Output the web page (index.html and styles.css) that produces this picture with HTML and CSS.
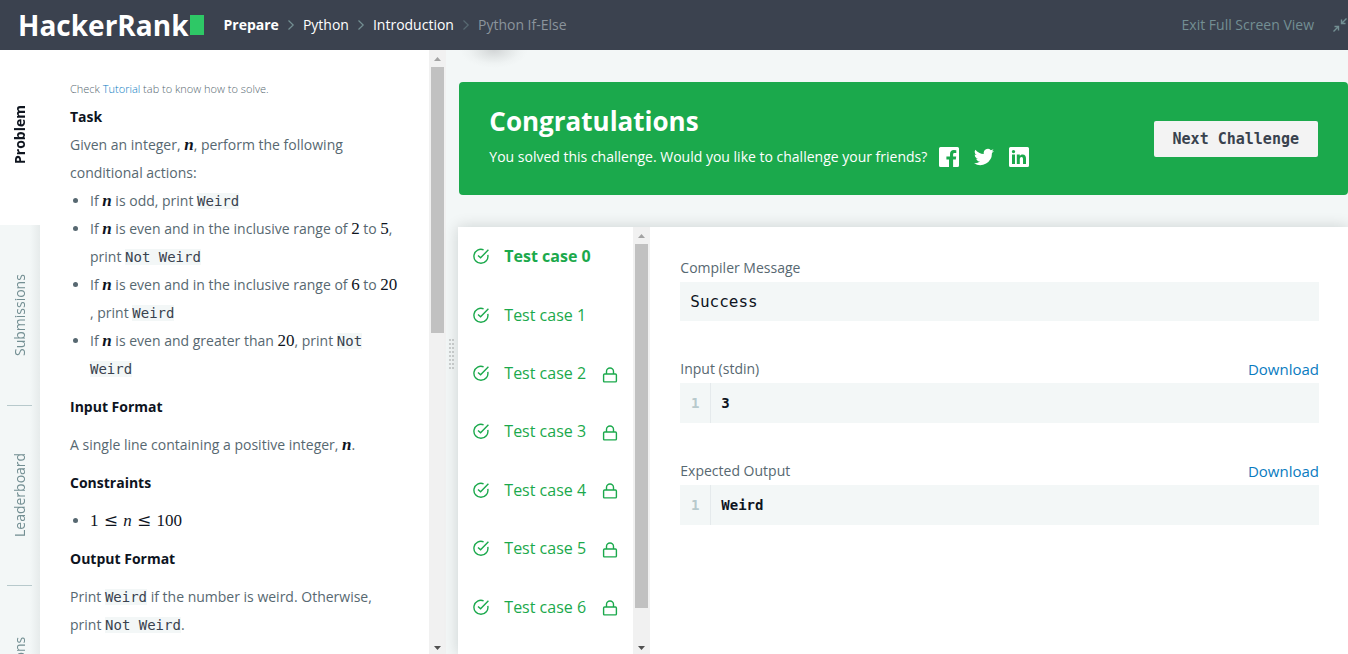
FILE: index.html
```html
<!DOCTYPE html>
<html lang="en">
<head>
<meta charset="utf-8">
<title>Python If-Else | HackerRank</title>
<link rel="stylesheet" href="styles.css">
</head>
<body>
<svg width="0" height="0" class="defs" aria-hidden="true">
  <symbol id="check" viewBox="0 0 16 16"><path d="M14.8 6.9A7 7 0 1 1 10.6 1.8M5 7.4l2.6 2.4L15.4 1.8" fill="none" stroke="currentColor" stroke-width="1.4"/></symbol>
  <symbol id="lock" viewBox="0 0 16 16"><path d="M2.6 7h10.8q1 0 1 1v5.900q0 1-1 1H2.600q-1 0-1-1V8q0-1 1-1zM4.500 7V4.500a3.500 3.500 0 0 1 7 0V7" fill="none" stroke="currentColor" stroke-width="1.400"/></symbol>
  <symbol id="chevron" viewBox="0 0 8 12"><path d="M1.500 1.500 6.200 6 1.500 10.500" fill="none" stroke="currentColor" stroke-width="1.200"/></symbol>
  <symbol id="up" viewBox="0 0 7 4"><path d="M0 4 3.500 0 7 4z" fill="currentColor"/></symbol>
  <symbol id="down" viewBox="0 0 7 4"><path d="M0 0 3.500 4 7 0z" fill="currentColor"/></symbol>
</svg>
<header class="topbar">
  <a class="logo" href="#">HackerRank<span class="logo-block"></span></a>
  <nav class="crumbs" aria-label="Breadcrumb">
    <a class="crumb crumb-strong" href="#">Prepare</a>
    <svg class="chevron"><use href="#chevron"/></svg>
    <a class="crumb" href="#">Python</a>
    <svg class="chevron"><use href="#chevron"/></svg>
    <a class="crumb" href="#">Introduction</a>
    <svg class="chevron chevron-dim"><use href="#chevron"/></svg>
    <span class="crumb crumb-current">Python If-Else</span>
  </nav>
  <button class="exit" type="button">Exit Full Screen View
    <svg class="exit-icon" viewBox="0 0 14 14"><path d="M0.500 13.500 5.500 8.500M1.500 8.500h4v4M13.500 .5l-5 5M8.500 1.500v4h4" fill="none" stroke="currentColor" stroke-width="1.400"/></svg>
  </button>
</header>
<main class="workspace">
  <section class="left">
    <nav class="tabs" aria-label="Challenge sections">
      <a class="tab tab-active" href="#">Problem</a>
      <a class="tab" href="#">Submissions</a>
      <a class="tab" href="#">Leaderboard</a>
      <a class="tab" href="#">Discussions</a>
    </nav>
    <article class="problem">
      <p class="hint">Check <a href="#">Tutorial</a> tab to know how to solve.</p>
      <h2>Task</h2>
      <p class="first">Given an integer, <i class="math bold">n</i>, perform the following conditional actions:</p>
      <ul class="first">
        <li>If <i class="math bold">n</i> is odd, print <code>Weird</code></li>
        <li>If <i class="math bold">n</i> is even and in the inclusive range of <span class="math">2</span> to <span class="math">5</span>, print <code>Not Weird</code></li>
        <li>If <i class="math bold">n</i> is even and in the inclusive range of <span class="math">6</span> to <span class="math">20</span><wbr>, print <code>Weird</code></li>
        <li>If <i class="math bold">n</i> is even and greater than <span class="math">20</span>, print <code>Not Weird</code></li>
      </ul>
      <h2>Input Format</h2>
      <p>A single line containing a positive integer, <i class="math bold">n</i>.</p>
      <h2>Constraints</h2>
      <ul><li><span class="math">1 <span class="rel">≤</span> <i>n</i> <span class="rel">≤</span> 100</span></li></ul>
      <h2>Output Format</h2>
      <p>Print <code>Weird</code> if the number is weird. Otherwise, print <code>Not Weird</code>.</p>
    </article>
    <div class="scroll" aria-hidden="true">
      <svg class="arrow"><use href="#up"/></svg>
      <div class="track"><div class="thumb thumb-problem"></div></div>
      <svg class="arrow arrow-dark"><use href="#down"/></svg>
    </div>
    <div class="splitter"><span class="grip"></span></div>
  </section>
  <section class="right">
    <div class="orb-shadow"></div>
    <div class="banner">
      <div class="banner-text">
        <h1>Congratulations</h1>
        <div class="share">
          <span class="share-text">You solved this challenge. Would you like to challenge your friends?</span>
          <a href="#" aria-label="Facebook"><svg viewBox="0 0 20 20"><path d="M1.500 0h17Q20 0 20 1.500v17q0 1.500-1.500 1.500h-4.400v-7.600h2.700l.4-3h-3.100V7.500c0-.9.3-1.500 1.500-1.500h1.700V3.200l-2.400-.1c-2.400 0-3.900 1.400-3.900 4v2.300H7.400v3H10V20H1.500Q0 20 0 18.500v-17Q0 0 1.500 0z"/></svg></a>
          <a href="#" aria-label="Twitter"><svg viewBox="0 0 24 24"><path d="M23.950 4.600a10 10 0 0 1-2.800.8 5 5 0 0 0 2.150-2.700 10 10 0 0 1-3.100 1.200 4.900 4.900 0 0 0-8.400 4.500A14 14 0 0 1 1.650 3.200a4.900 4.900 0 0 0 1.500 6.500 4.900 4.900 0 0 1-2.200-.6 4.900 4.900 0 0 0 3.900 4.900 5 5 0 0 1-2.200.1 4.900 4.900 0 0 0 4.600 3.400A9.900 9.900 0 0 1 0 19.500a14 14 0 0 0 21.500-12.400A10 10 0 0 0 23.950 4.600z"/></svg></a>
          <a href="#" aria-label="LinkedIn"><svg viewBox="0 0 20 20"><path fill-rule="evenodd" d="M1.500 0h17Q20 0 20 1.500v17q0 1.500-1.500 1.500h-17Q0 20 0 18.500v-17Q0 0 1.500 0zM3 7.600V17h3V7.600zM4.500 2.900a1.700 1.700 0 1 0 0 3.400 1.700 1.700 0 0 0 0-3.400zM7.800 7.600V17h3v-4.700c0-1.300.4-2.300 1.700-2.300s1.500 1.100 1.500 2.400V17h3v-5.300c0-2.500-.8-4.300-3.400-4.300-1.400 0-2.400.7-2.800 1.500V7.600z"/></svg></a>
        </div>
      </div>
      <button class="next" type="button">Next Challenge</button>
    </div>
    <div class="results">
      <ul class="cases">
        <li><button class="case case-active" type="button"><svg class="check"><use href="#check"/></svg>Test case 0</button></li>
        <li><button class="case" type="button"><svg class="check"><use href="#check"/></svg>Test case 1</button></li>
        <li><button class="case" type="button"><svg class="check"><use href="#check"/></svg>Test case 2<svg class="lock"><use href="#lock"/></svg></button></li>
        <li><button class="case" type="button"><svg class="check"><use href="#check"/></svg>Test case 3<svg class="lock"><use href="#lock"/></svg></button></li>
        <li><button class="case" type="button"><svg class="check"><use href="#check"/></svg>Test case 4<svg class="lock"><use href="#lock"/></svg></button></li>
        <li><button class="case" type="button"><svg class="check"><use href="#check"/></svg>Test case 5<svg class="lock"><use href="#lock"/></svg></button></li>
        <li><button class="case" type="button"><svg class="check"><use href="#check"/></svg>Test case 6<svg class="lock"><use href="#lock"/></svg></button></li>
      </ul>
      <div class="scroll" aria-hidden="true">
        <svg class="arrow"><use href="#up"/></svg>
        <div class="track"><div class="thumb thumb-cases"></div></div>
        <svg class="arrow arrow-dark"><use href="#down"/></svg>
      </div>
      <div class="detail">
        <section class="block">
          <div class="block-head"><h3>Compiler Message</h3></div>
          <div class="message">Success</div>
        </section>
        <section class="block">
          <div class="block-head"><h3>Input (stdin)</h3><a href="#">Download</a></div>
          <div class="code"><span class="line-no">1</span><span class="line">3</span></div>
        </section>
        <section class="block">
          <div class="block-head"><h3>Expected Output</h3><a href="#">Download</a></div>
          <div class="code"><span class="line-no">1</span><span class="line">Weird</span></div>
        </section>
      </div>
    </div>
  </section>
</main>
</body>
</html>
```
FILE: styles.css
```css
* { box-sizing: border-box; }
body {
  margin: 0;
  height: 100vh;
  display: flex;
  flex-direction: column;
  overflow: hidden;
  font: 14px/20px "Open Sans", sans-serif;
  color: #576871;
  background: #f3f7f7;
}
h1, h2, h3, p, ul { margin: 0; padding: 0; }
a { color: #097bbf; text-decoration: none; }
button { font: inherit; border: 0; background: none; padding: 0; cursor: pointer; }
.defs { position: absolute; }

.topbar {
  flex: none;
  height: 50px;
  display: flex;
  align-items: center;
  padding-left: 18px;
  background: #3b424f;
}
.logo {
  display: flex;
  align-items: center;
  gap: 1px;
  margin-right: 20px;
  color: #fff;
  font-size: 28px;
  font-weight: 700;
}
.logo-block { width: 14px; height: 20px; background: #2ec866; }
.crumbs { display: flex; align-items: center; gap: 8px; }
.crumb { color: #fff; }
.crumb-strong { font-weight: 700; }
.crumb-current { color: #8b949c; }
.chevron { width: 8px; height: 12px; color: #738f93; }
.chevron-dim { opacity: .5; }
.exit {
  display: flex;
  align-items: center;
  gap: 19px;
  margin-left: auto;
  padding-right: 1px;
  color: #738f93;
}
.exit-icon { width: 14px; height: 14px; }

.workspace { flex: 1; min-height: 0; display: grid; grid-template-columns: 34% 1fr; }
.left { display: flex; min-height: 0; overflow: hidden; }
.tabs {
  flex: 0 0 40px;
  background: linear-gradient(to right, #f3f7f7 30px, #e6ebeb);
}
.tab {
  position: relative;
  height: 180px;
  width: 40px;
  display: flex;
  align-items: center;
  justify-content: center;
  writing-mode: vertical-rl;
  transform: rotate(180deg);
  color: #738f93;
}
.tab + .tab + .tab::after {
  content: "";
  position: absolute;
  left: 8px;
  right: 7px;
  bottom: 0;
  height: 1px;
  background: #b7c9cc;
}
.tab-active {
  height: 175px;
  padding-top: 5px;
  background: #fff;
  color: #0e141e;
  font-weight: 700;
}
.problem {
  flex: 1;
  min-width: 0;
  padding: 25px 30px 0;
  background: #fff;
  line-height: 28px;
}
.problem .hint { font-size: 11px; font-weight: 300; }
.problem h2 { font-size: 14px; font-weight: 700; color: #0e141e; margin-top: 10px; }
.problem .hint + h2 { margin-top: 0; }
.problem p, .problem ul { margin-top: 10px; }
.problem .hint, .problem .first { margin-top: 0; }
.problem ul { padding-left: 20px; }
.problem code {
  font: 14px/18px "DejaVu Sans Mono", monospace;
  color: #39424e;
  background: #f3f7f7;
}
.math { font-family: "Liberation Serif", serif; font-size: 17px; line-height: 18px; color: #0e141e; }
.bold { font-weight: 700; }
.rel { font-family: "DejaVu Serif", serif; margin: 0 1px; }

.scroll {
  flex: 0 0 17px;
  display: flex;
  flex-direction: column;
  align-items: center;
  background: #f1f1f1;
}
.arrow { width: 7px; height: 4px; margin: 7px 0 6px; color: #a3a3a3; }
.arrow-dark { color: #505050; margin: 6px 0 4px; }
.track { flex: 1; width: 13px; min-height: 0; }
.thumb { background: #c1c1c1; }
.thumb-problem { height: 46.500%; }
.thumb-cases { height: 92%; }
.splitter {
  flex: 0 0 12px;
  display: flex;
  align-items: center;
  justify-content: center;
  padding-top: 4px;
}
.grip {
  width: 6px;
  height: 31px;
  background:
    conic-gradient(#ccd0d0 0 0) 0 0 / 2px 100% no-repeat,
    conic-gradient(#ccd0d0 0 0) 3px 0 / 2px 100% no-repeat;
  -webkit-mask: repeating-linear-gradient(#000 0 2px, transparent 2px 4px);
  mask: repeating-linear-gradient(#000 0 2px, transparent 2px 4px);
}

.right { position: relative; min-width: 0; display: flex; flex-direction: column; }
.orb-shadow {
  position: absolute;
  top: 0;
  left: 0;
  width: 72px;
  height: 24px;
  background: radial-gradient(ellipse 34px 18px at 50% 0, #d2d5d6, #e4e8e8 45%, #eff3f3 75%, #f3f7f7);
}
.banner {
  display: flex;
  align-items: center;
  justify-content: space-between;
  margin: 32px 0 32px 1px;
  padding: 21px 30px 26px;
  border-radius: 4px;
  background: #1ba94c;
  color: #fff;
}
.banner h1 { font-size: 26px; line-height: 36px; font-weight: 700; }
.share { display: flex; align-items: center; gap: 15px; padding-top: 6px; line-height: 24px; }
.share-text { margin-right: -3px; }
.share a, .share svg { display: block; width: 20px; height: 20px; fill: #fff; }
.next {
  height: 36px;
  margin-top: 6px;
  padding: 0 19px;
  border-radius: 2px;
  background: #f3f3f3;
  color: #39424e;
  font: 700 15px/36px "DejaVu Sans Mono", monospace;
}
.results {
  flex: 1;
  min-height: 0;
  display: flex;
  background: #fff;
  box-shadow: 0 0 14px rgba(0, 20, 20, .16);
}
.cases {
  flex: 0 0 175px;
  display: grid;
  grid-template-rows: repeat(7, 1fr);
  padding-bottom: 18px;
  list-style: none;
}
.case {
  width: 100%;
  height: 100%;
  display: flex;
  align-items: center;
  padding: 0 15px;
  color: #1ba94c;
  font-size: 16px;
}
.case-active { font-weight: 700; }
.check { width: 16px; height: 16px; margin-right: 15px; }
.lock { width: 16px; height: 16px; margin: 3px 0 0 auto; }
.detail {
  flex: 1;
  min-width: 0;
  display: flex;
  flex-direction: column;
  gap: 34px;
  padding: 27px 29px 0 30px;
}
.block-head { display: flex; justify-content: space-between; line-height: 28px; }
.block-head h3 { font-size: 14px; font-weight: 400; }
.block-head a { font-size: 15px; }
.message {
  padding: 10px;
  background: #f3f7f7;
  color: #0e141e;
  font: 16px/19px "DejaVu Sans Mono", monospace;
}
.code {
  display: flex;
  background: #f3f7f7;
  color: #0e141e;
  font: 700 14px/40px "DejaVu Sans Mono", monospace;
}
.line-no { width: 31px; text-align: center; color: #b7c9cc; border-right: 1px solid #e5eaec; }
.line { padding-left: 10px; }
```
